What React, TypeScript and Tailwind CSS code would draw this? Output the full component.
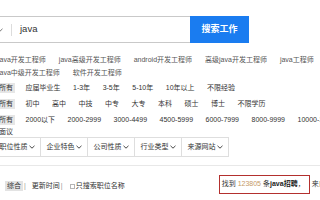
import React from "react";

/* ─── Data ─── */
const HOT_ROW_1 = ["java开发工程师", "java高级开发工程师", "android开发工程师", "高级java开发工程师", "java工程师"];
const HOT_ROW_2 = ["java中级开发工程师", "软件开发工程师"];

const FILTERS: string[][] = [
  ["所有", "应届毕业生", "1-3年", "3-5年", "5-10年", "10年以上", "不限经验"],
  ["所有", "初中", "高中", "中技", "中专", "大专", "本科", "硕士", "博士", "不限学历"],
  ["所有", "2000以下", "2000-2999", "3000-4499", "4500-5999", "6000-7999", "8000-9999", "10000-14999", "15000以上", "面议"],
];

const DROPDOWNS = ["职位性质", "企业特色", "公司性质", "行业类型", "来源网站"];

function Chevron({ className = "" }: { className?: string }) {
  return (
    <svg width="6" height="4" viewBox="0 0 6 4" className={className}>
      <polyline points="0.5,0.8 3,3.2 5.5,0.8" fill="none" stroke="currentColor" strokeWidth="0.9" />
    </svg>
  );
}

export default function App() {
  return (
    <div className="w-[320px] h-[200px] overflow-hidden bg-white font-['Liberation_Sans','Noto_Sans_CJK_SC',sans-serif]">
      <div className="-ml-[3px] w-[440px] pt-[16px]">

        {/* ─── SEARCH BAR ─── */}
        <div className="-ml-[17px] flex h-[27px]">
          <div className="flex w-[210px] items-center border border-r-0 border-[#c9c9c9] pl-[16px]">
            <Chevron className="text-[#666]" />
            <span className="ml-[8px] h-[12px] w-px bg-[#dcdcdc]" />
            <span className="ml-[8px] text-[9.5px] text-[#333]">java</span>
          </div>
          <button className="w-[59px] bg-[#1a7cf0] text-[9px] font-bold text-white">搜索工作</button>
        </div>

        {/* ─── HOT WORDS ─── */}
        <div className="mt-[10px] text-[7px] leading-[13px] text-[#555]">
          <div className="flex gap-[13px] whitespace-nowrap pl-[1px]">
            {HOT_ROW_1.map((w) => (
              <span key={w}>{w}</span>
            ))}
          </div>
          <div className="flex gap-[13px] whitespace-nowrap pl-[1px]">
            {HOT_ROW_2.map((w) => (
              <span key={w}>{w}</span>
            ))}
          </div>
        </div>

        {/* ─── FILTER ROWS ─── */}
        <div className="mt-[4px] w-[400px] space-y-[6px] text-[7px] leading-[10px] text-[#333]">
          {FILTERS.map((row, i) => (
            <div key={i} className="flex flex-wrap gap-x-[8.5px] gap-y-[2px] whitespace-nowrap">
              {row.map((item, j) => (
                <span key={item} className={`h-[10px] px-[2px] ${j === 0 ? "bg-[#e6e6e6]" : ""}`}>
                  {item}
                </span>
              ))}
            </div>
          ))}
        </div>

        {/* ─── DROPDOWNS ─── */}
        <div className="-ml-[4px] flex h-[20px] w-max border-l border-[#dedede] text-[7px] text-[#333]">
          {DROPDOWNS.map((d) => (
            <div key={d} className="flex w-[47px] items-center justify-center gap-[1px] border-y border-r border-[#dedede]">
              <span>{d}</span>
              <Chevron />
            </div>
          ))}
        </div>

        <div className="mt-[8px] h-px w-full bg-[#e8e8e8]" />

        {/* ─── SORT + RESULT COUNT ─── */}
        <div className="mt-[9px] flex h-[19px] items-center whitespace-nowrap text-[7px] text-[#333]">
          <span className="ml-[8px] mt-[3px] px-[2px] leading-[10px] bg-[#e3e3e3]">综合</span>
          <span className="ml-[1px] mt-[3px] text-[#999]">|</span>
          <span className="ml-[6px] mt-[3px]">更新时间</span>
          <span className="ml-[1px] mt-[3px] text-[#999]">|</span>
          <span className="ml-[7px] mt-[3px] h-[5px] w-[5px] border border-[#b5b5b5]" />
          <span className="ml-[1px] mt-[3px]">只搜索职位名称</span>

          <span className="ml-[94px] flex h-[19px] items-center border-[1.5px] border-[#b3302e] pl-[2px] pr-[4px]">
            找到 <span className="mx-[2px] text-[#c59a66]">123805</span> 条<span className="font-bold text-[#222]">java招聘</span>，
          </span>
          <span className="ml-[2px]">来自 56 个网站</span>
        </div>
      </div>
    </div>
  );
}
